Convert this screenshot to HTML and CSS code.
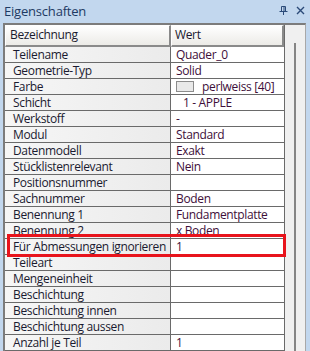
FILE: index.html
```html
<!DOCTYPE html>
<html lang="de">
<head>
<meta charset="utf-8">
<title>Eigenschaften</title>
<link rel="stylesheet" href="styles.css">
</head>
<body>
<div class="window">
  <div class="titlebar">
    <span class="title">Eigenschaften</span>
    <span class="tools">
      <svg class="pin" width="9" height="9" viewBox="0 0 9 9"><path d="M2.5 0.5h4v5h-4z M0.5 5.5h8 M4.5 5.5v3.5" fill="none" stroke="#2b4a78" stroke-width="1"/><path d="M5 1v4" stroke="#2b4a78" stroke-width="1"/></svg>
      <svg class="close" width="9" height="9" viewBox="0 0 9 9"><path d="M1 1L8 8M8 1L1 8" stroke="#2b4a78" stroke-width="1.4"/></svg>
    </span>
  </div>
  <div class="panel">
    <div class="grid">
      <div class="head"><div class="hcell hk">Bezeichnung</div><div class="hcell hv">Wert</div></div>
      <div class="row"><div class="k">Teilename</div><div class="v">Quader_0</div></div>
      <div class="row"><div class="k">Geometrie-Typ</div><div class="v">Solid</div></div>
      <div class="row"><div class="k">Farbe</div><div class="v"><span class="swatch"></span><span class="swname">perlweiss [40]</span></div></div>
      <div class="row"><div class="k">Schicht</div><div class="v indent">1 - APPLE</div></div>
      <div class="row"><div class="k">Werkstoff</div><div class="v">-</div></div>
      <div class="row"><div class="k">Modul</div><div class="v">Standard</div></div>
      <div class="row"><div class="k">Datenmodell</div><div class="v">Exakt</div></div>
      <div class="row"><div class="k">Stücklistenrelevant</div><div class="v">Nein</div></div>
      <div class="row"><div class="k">Positionsnummer</div><div class="v"></div></div>
      <div class="row"><div class="k">Sachnummer</div><div class="v">Boden</div></div>
      <div class="row"><div class="k">Benennung 1</div><div class="v">Fundamentplatte</div></div>
      <div class="row"><div class="k">Benennung 2</div><div class="v">x Boden</div></div>
      <div class="row"><div class="k">Für Abmessungen ignorieren</div><div class="v">1</div></div>
      <div class="row"><div class="k">Teileart</div><div class="v"></div></div>
      <div class="row"><div class="k">Mengeneinheit</div><div class="v"></div></div>
      <div class="row"><div class="k">Beschichtung</div><div class="v"></div></div>
      <div class="row"><div class="k">Beschichtung innen</div><div class="v"></div></div>
      <div class="row"><div class="k">Beschichtung aussen</div><div class="v"></div></div>
      <div class="row"><div class="k">Anzahl je Teil</div><div class="v">1</div></div>
    </div>
    <div class="scroll"><div class="track"></div></div>
  </div>
  <div class="mark"></div>
</div>
</body>
</html>
```

FILE: styles.css
```css
html, body {
  margin: 0;
  padding: 0;
}
body {
  background: #c2d7ee;
  width: 310px;
  height: 351px;
  overflow: hidden;
  font-family: "Open Sans", "Noto Sans", sans-serif;
  font-size: 12px;
  letter-spacing: -0.35px;
}
.window {
  position: relative;
  width: 310px;
  height: 351px;
}
.titlebar {
  height: 23px;
  display: flex;
  align-items: center;
  justify-content: space-between;
  padding: 0 5px 0 4px;
  box-sizing: border-box;
}
.title {
  color: #1e3a63;
  font-size: 13px;
  letter-spacing: -0.2px;
  line-height: 14px;
  margin-top: -2px;
}
.tools {
  display: flex;
  gap: 8px;
  align-items: center;
  margin-top: -3px;
}
.tools svg { display: block; }
.panel {
  display: flex;
  margin: 0 4px 0 3px;
  border-top: 2px solid #7c7c7c;
  border-left: 2px solid #7c7c7c;
  border-right: 1px solid #a8a8a8;
  background: #f0f0f0;
  height: 328px;
}
.grid {
  width: 280px;
  background: #ffffff;
  border-right: 1px solid #6a6a6a;
  box-sizing: border-box;
}
.head {
  display: grid;
  grid-template-columns: 166px 1fr;
  height: 22px;
  box-sizing: border-box;
}
.hcell {
  background: linear-gradient(to bottom, #ffffff, #ecebe7);
  border-top: 1px solid #ffffff;
  border-left: 1px solid #ffffff;
  border-bottom: 2px solid #8a8a8a;
  border-right: 2px solid #8a8a8a;
  box-sizing: border-box;
  color: #1a1a2e;
  line-height: 18px;
  padding-left: 4px;
}
.hv { padding-left: 3px; }
.row {
  display: grid;
  grid-template-columns: 166px 1fr;
  height: 16px;
  border-bottom: 1px solid #6a6a6a;
  box-sizing: border-box;
}
.k {
  background: linear-gradient(to right, #f6f6f6, #ebebeb);
  border-right: 1px solid #6a6a6a;
  color: #1a1a30;
  padding-left: 8px;
  line-height: 15px;
  white-space: nowrap;
  overflow: hidden;
}
.v {
  color: #3e0f3a;
  padding-left: 5px;
  line-height: 15px;
  white-space: nowrap;
  display: flex;
  align-items: center;
}
.indent { padding-left: 12px; }
.swatch {
  width: 18px;
  height: 11px;
  background: #e9e9e9;
  border: 1px solid #8c8c8c;
  box-sizing: border-box;
  margin-right: 8px;
}
.scroll {
  flex: 1;
  display: flex;
  justify-content: center;
  padding-top: 18px;
}
.track {
  width: 2px;
  background: #858585;
  height: 100%;
  margin-left: -1px;
}
.mark {
  position: absolute;
  left: 7px;
  top: 234px;
  width: 279px;
  height: 23px;
  border: 3px solid #e8141c;
  box-sizing: border-box;
}
```
